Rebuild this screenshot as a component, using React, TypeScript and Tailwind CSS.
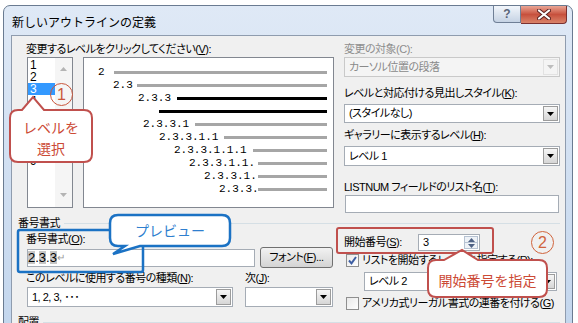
import React from 'react';

// underlined access key
const K = ({ c }: { c: string }) => <span className="underline underline-offset-[1px]">{c}</span>;

const Tri = ({ color = '#000', up = false }: { color?: string; up?: boolean }) => (
  <svg width="7" height="4" viewBox="0 0 7 4">
    <path d={up ? 'M0 4h7L3.5 0z' : 'M0 0h7L3.5 4z'} fill={color} />
  </svg>
);

function Combo({ className, text, disabled }: { className: string; text?: string; disabled?: boolean }) {
  return (
    <div
      className={`flex items-stretch border ${
        disabled ? 'border-[#c9c9c9] bg-[#f4f4f4] text-[#8a8a8a]' : 'border-[#a5acb5] bg-white text-black'
      } ${className}`}
    >
      <div className="flex flex-1 items-center whitespace-nowrap pl-[4px] leading-none">{text}</div>
      <div
        className={`m-px flex w-[15px] items-center justify-center border ${
          disabled ? 'border-[#e2e2e2] bg-[#f4f4f4]' : 'border-[#9c9c9c] bg-gradient-to-b from-[#f6f6f6] to-[#d6d6d6]'
        }`}
      >
        <Tri color={disabled ? '#bdbdbd' : '#000'} />
      </div>
    </div>
  );
}

function Check({ on }: { on?: boolean }) {
  return (
    <div className="flex h-[13px] w-[13px] shrink-0 items-center justify-center border border-[#8f8f8f] bg-gradient-to-br from-[#e9e9e9] to-white">
      {on && (
        <svg width="9" height="9" viewBox="0 0 9 9">
          <path d="M1 4.5l2.5 2.8L8 1" fill="none" stroke="#3d5ea3" strokeWidth="2" />
        </svg>
      )}
    </div>
  );
}

// outline preview rows: text start + where the rule starts
const rows = [
  { t: '2', box: 'pl-[14px] w-[30px]', line: 'bg-[#a6a6a6]' },
  { t: '2.3', box: 'pl-[29px] w-[53px]', line: 'bg-[#a6a6a6]' },
  { t: '2.3.3', box: 'pl-[54px] w-[93px]', line: 'bg-black' },
  { t: '', box: 'w-[75px]', line: 'bg-black' },
  { t: '2.3.3.1', box: 'pl-[59px] w-[111px]', line: 'bg-[#a6a6a6]' },
  { t: '2.3.3.1.1', box: 'pl-[75px] w-[140px]', line: 'bg-[#a6a6a6]' },
  { t: '2.3.3.1.1.1', box: 'pl-[90px] w-[169px]', line: 'bg-[#a6a6a6]' },
  { t: '2.3.3.1.1.', box: 'pl-[105px] w-[174px]', line: 'bg-[#a6a6a6]' },
  { t: '2.3.3.1.', box: 'pl-[120px] w-[174px]', line: 'bg-[#a6a6a6]' },
  { t: '2.3.3.', box: 'pl-[135px] w-[174px]', line: 'bg-[#a6a6a6]' },
];

export default function App() {
  return (
    <div className="relative h-[323px] w-[578px] overflow-hidden bg-white font-['Liberation_Sans','Noto_Sans_CJK_JP',sans-serif] text-[12px] text-black">
      {/* window */}
      <div className="ml-[3px] mt-[5px] flex h-[330px] w-[570px] flex-col rounded-t-[7px] border border-[#6a7b91] bg-gradient-to-b from-[#dfe9f6] to-[#c3d6ed] pl-[7px] pr-[6px]">
        <div className="-ml-[7px] -mr-[6px] flex h-[29px] shrink-0 items-start justify-between">
          <div className="pl-[8px] pt-[8px] text-[12px] leading-[16px] font-['Noto_Sans_CJK_JP',sans-serif]">
            新しいアウトラインの定義
          </div>
          <div className="mr-[5px] flex items-start">
            <div className="flex h-[17px] w-[28px] items-center justify-center rounded-bl-[4px] border border-t-0 border-[#6f7f96] bg-gradient-to-b from-[#f2f6fb] to-[#c6d3e4] text-[12px] font-bold leading-none text-[#5a6478]">
              ?
            </div>
            <div className="flex h-[18px] w-[46px] items-center justify-center rounded-br-[4px] border border-l-0 border-t-0 border-[#7a3030] bg-gradient-to-b from-[#e9a595] via-[#c7503d] to-[#d9836a]">
              <svg width="14" height="11" viewBox="0 0 14 11">
                <path d="M2 1.5l10 8M12 1.5l-10 8" stroke="#5a2020" strokeWidth="4" strokeLinecap="round" />
                <path d="M2 1.5l10 8M12 1.5l-10 8" stroke="#fff" strokeWidth="2.2" strokeLinecap="round" />
              </svg>
            </div>
          </div>
        </div>

        {/* client area */}
        <div className="flex-1 border border-[#8f9cae] bg-[#f0f0f0] pl-[14px] pr-[5px] pt-[6px] text-[11px] tracking-[-0.5px] [font-feature-settings:'palt']">
          <div className="flex items-start">
            {/* left: levels + preview */}
            <div className="w-[308px]">
              <div className="h-[14px] whitespace-nowrap leading-[14px]">
                変更するレベルをクリックしてください(<K c="V" />):
              </div>
              <div className="mt-px flex">
                <div className="ml-px flex h-[151px] w-[46px] border border-[#828790] bg-white text-[12px] tracking-normal">
                  <div className="flex-1 pt-px">
                    {[1, 2, 3, 4, 5, 6, 7, 8, 9].map((n) => (
                      <div
                        key={n}
                        className={
                          n === 3
                            ? 'h-[12px] bg-[#3399ff] pl-[2px] leading-[12px] text-white'
                            : 'h-[12px] pl-[2px] leading-[12px]'
                        }
                      >
                        {n}
                      </div>
                    ))}
                  </div>
                  <div className="flex w-[17px] flex-col items-center justify-between bg-[#f5f5f5] pb-[10px] pt-[9px]">
                    <Tri color="#b4b4b4" up />
                    <Tri color="#b4b4b4" />
                  </div>
                </div>
                <div className="ml-[10px] h-[151px] w-[251px] border border-[#828790] bg-white pr-[6px] pt-[8px] font-['Liberation_Mono',monospace] text-[11px] tracking-normal">
                  {rows.map((r, i) => (
                    <div key={i} className="flex h-[13px] items-center">
                      <span className={`shrink-0 whitespace-nowrap leading-[13px] ${r.box}`}>{r.t}</span>
                      <div className={`h-[3px] flex-1 ${r.line}`} />
                    </div>
                  ))}
                </div>
              </div>
            </div>

            {/* right: styles */}
            <div className="ml-[10px] w-[216px]">
              <div className="h-[14px] whitespace-nowrap leading-[14px] text-[#8d8d8d]">変更の対象(C):</div>
              <Combo className="mt-px h-[20px] w-[216px]" text="カーソル位置の段落" disabled />
              <div className="mt-[9px] h-[14px] whitespace-nowrap leading-[14px]">
                レベルと対応付ける見出しスタイル(<K c="K" />):
              </div>
              <Combo className="mt-[4px] h-[19px] w-[216px]" text="(スタイルなし)" />
              <div className="mt-[5px] h-[14px] whitespace-nowrap leading-[14px]">
                ギャラリーに表示するレベル(<K c="H" />):
              </div>
              <Combo className="mt-[4px] h-[20px] w-[216px]" text="レベル 1" />
              <div className="mt-[14px] h-[14px] whitespace-nowrap leading-[14px]">
                LISTNUM フィールドのリスト名(<K c="T" />):
              </div>
              <div className="ml-px mt-px h-[18px] w-[214px] border border-[#a5acb5] bg-white" />
            </div>
          </div>

          {/* group: 番号書式 */}
          <div className="-ml-[8px] mt-[3px] flex h-[14px] items-center">
            <span className="leading-[14px]">番号書式</span>
            <div className="ml-[4px] flex-1 border-t border-[#d5dfe5]" />
          </div>

          <div className="flex items-start">
            <div className="w-[308px]">
              <div className="mt-[2px] h-[14px] whitespace-nowrap leading-[14px]">
                番号書式(<K c="O" />):
              </div>
              <div className="mt-px flex h-[21px] items-center">
                <div className="ml-px flex h-[18px] w-[228px] items-center border border-[#a5acb5] bg-white font-['Liberation_Sans',sans-serif] text-[13px] leading-none tracking-normal">
                  <span className="bg-[#c6c6c6]">2</span>
                  <span>.</span>
                  <span className="bg-[#c6c6c6]">3</span>
                  <span>.</span>
                  <span className="bg-[#c6c6c6]">3</span>
                  <span className="text-[10px] text-[#9a9a9a]">↵</span>
                </div>
                <div className="ml-[5px] flex h-[21px] w-[73px] items-center justify-center rounded-[3px] border border-[#707070] bg-gradient-to-b from-[#f2f2f2] to-[#d4d4d4] whitespace-nowrap leading-none">
                  フォント(<K c="F" />)...
                </div>
              </div>
              <div className="mt-[3px] flex h-[14px] leading-[14px]">
                <span className="w-[219px] whitespace-nowrap">
                  このレベルに使用する番号の種類(<K c="N" />):
                </span>
                <span className="whitespace-nowrap">
                  次(<K c="J" />):
                </span>
              </div>
              <div className="mt-[2px] flex">
                <Combo className="ml-px h-[20px] w-[206px]" text="1, 2, 3, ･･･" />
                <Combo className="ml-[12px] h-[20px] w-[88px]" />
              </div>
            </div>

            <div className="ml-[10px] w-[216px]">
              <div className="mt-[2px] flex h-[21px] items-center">
                <span className="w-[74px] whitespace-nowrap">
                  開始番号(<K c="S" />):
                </span>
                <div className="flex h-[17px] w-[62px] border border-[#a5acb5] bg-white">
                  <div className="flex flex-1 items-center pl-[4px] leading-none">3</div>
                  <div className="m-px flex w-[14px] flex-col">
                    <div className="flex flex-1 items-center justify-center border border-[#b6c2d2] bg-[#eef2f7]">
                      <Tri color="#4d6185" up />
                    </div>
                    <div className="flex flex-1 items-center justify-center border border-t-0 border-[#b6c2d2] bg-[#eef2f7]">
                      <Tri color="#4d6185" />
                    </div>
                  </div>
                </div>
              </div>
              <div className="flex h-[14px] items-center">
                <div className="ml-[2px]">
                  <Check on />
                </div>
                <span className="ml-[3px] whitespace-nowrap leading-[14px]">
                  リストを開始するレベルを指定する(<K c="R" />):
                </span>
              </div>
              <Combo className="ml-[20px] mt-[5px] h-[19px] w-[193px]" text="レベル 2" />
              <div className="mt-[5px] flex h-[14px] items-center">
                <div className="ml-[2px]">
                  <Check />
                </div>
                <span className="ml-[3px] whitespace-nowrap leading-[14px]">
                  アメリカ式リーガル書式の連番を付ける(<K c="G" />)
                </span>
              </div>
            </div>
          </div>

          <div className="-ml-[8px] mt-[5px] flex h-[14px] items-center">
            <span className="leading-[14px]">配置</span>
            <div className="ml-[4px] flex-1 border-t border-[#d5dfe5]" />
          </div>
        </div>
      </div>

      {/* annotations drawn over the dialog */}
      <svg className="pointer-events-none absolute left-0 top-0" width="578" height="323" viewBox="0 0 578 323">
        <rect x="18" y="230" width="125" height="42" rx="2" fill="none" stroke="#1b72c4" strokeWidth="2.5" />
        <rect x="337" y="228" width="156" height="25" rx="2" fill="none" stroke="#c0504d" strokeWidth="2" />
        <path
          d="M18 110 L22 110 L33 97 L44 110 L84 110 Q92 110 92 118 L92 154 Q92 162 84 162 L18 162 Q10 162 10 154 L10 118 Q10 110 18 110 Z"
          fill="#fff"
          stroke="#c0504d"
          strokeWidth="2"
        />
        <path
          d="M118 215 L222 215 Q230 215 230 223 L230 238 Q230 246 222 246 L140 246 L113 254 L125 246 L118 246 Q110 246 110 238 L110 223 Q110 215 118 215 Z"
          fill="#fff"
          stroke="#1b72c4"
          strokeWidth="2.5"
        />
        <path
          d="M436 260 L444 260 L462 250 L478 260 L539 260 Q547 260 547 268 L547 289 Q547 297 539 297 L436 297 Q428 297 428 289 L428 268 Q428 260 436 260 Z"
          fill="#fff"
          stroke="#c0504d"
          strokeWidth="2"
        />
      </svg>

      <div className="absolute left-[10px] top-[117px] w-[82px] text-center font-['Noto_Sans_CJK_JP',sans-serif] text-[14px] leading-[21px] text-[#cc4a35]">
        レベルを
        <br />
        選択
      </div>
      <div className="absolute left-[110px] top-[220px] w-[120px] text-center font-['Noto_Sans_CJK_JP',sans-serif] text-[14px] leading-[20px] text-[#2f7fcf]">
        プレビュー
      </div>
      <div className="absolute left-[428px] top-[270px] w-[119px] text-center font-['Noto_Sans_CJK_JP',sans-serif] text-[14px] leading-[20px] text-[#cc4a35]">
        開始番号を指定
      </div>

      <div className="absolute left-[50px] top-[83px] flex h-[23px] w-[23px] items-center justify-center rounded-full border-[1.5px] border-[#c9573d] font-['Liberation_Sans',sans-serif] text-[16px] leading-none text-[#c9573d]">
        1
      </div>
      <div className="absolute left-[531px] top-[231px] flex h-[23px] w-[23px] items-center justify-center rounded-full border-[1.5px] border-[#d0643c] font-['Liberation_Sans',sans-serif] text-[16px] leading-none text-[#d0643c]">
        2
      </div>
    </div>
  );
}
